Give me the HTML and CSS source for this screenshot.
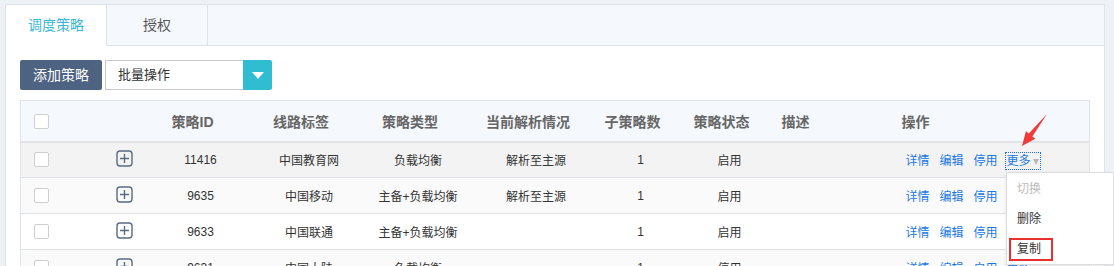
FILE: index.html
```html
<!DOCTYPE html>
<html lang="zh-CN">
<head>
    <meta charset="UTF-8">
    <title>调度策略</title>
    <link rel="stylesheet" href="styles.css">
</head>
<body>
    <div class="panel">
        <div class="tabs">
            <div class="tab active">调度策略</div>
            <div class="tab">授权</div>
        </div>
        <div class="content">
            <div class="toolbar">
                <div class="btn_add">添加策略</div>
                <div class="batch">
                    <div class="batch_text">批量操作</div>
                    <div class="batch_arrow"><i></i></div>
                </div>
            </div>
            <table class="grid">
                <colgroup>
                    <col style="width:42px">
                    <col style="width:88px">
                    <col style="width:92px">
                    <col style="width:125px">
                    <col style="width:93px">
                    <col style="width:143px">
                    <col style="width:66px">
                    <col style="width:112px">
                    <col style="width:36px">
                    <col>
                </colgroup>
                <thead>
                    <tr>
                        <th class="c_check"><span class="check"></span></th>
                        <th></th>
                        <th>策略ID</th>
                        <th>线路标签</th>
                        <th>策略类型</th>
                        <th>当前解析情况</th>
                        <th>子策略数</th>
                        <th>策略状态</th>
                        <th>描述</th>
                        <th class="c_ops">操作</th>
                    </tr>
                </thead>
                <tbody>
                    <tr class="hover">
                        <td class="c_check"><span class="check"></span></td>
                        <td class="c_expand"><svg width="17" height="17" viewBox="0 0 17 17"><rect x="1" y="1" width="15" height="15" rx="3" fill="none" stroke="#5b6b82" stroke-width="1.4"/><path d="M4 8.5h9M8.5 4v9" stroke="#5b6b82" stroke-width="1.4"/></svg></td>
                        <td>11416</td>
                        <td>中国教育网</td>
                        <td>负载均衡</td>
                        <td>解析至主源</td>
                        <td>1</td>
                        <td>启用</td>
                        <td></td>
                        <td class="c_ops"><a>详情</a><a>编辑</a><a>停用</a><a class="more">更多<b></b></a></td>
                    </tr>
                    <tr class="stripe">
                        <td class="c_check"><span class="check"></span></td>
                        <td class="c_expand"><svg width="17" height="17" viewBox="0 0 17 17"><rect x="1" y="1" width="15" height="15" rx="3" fill="none" stroke="#5b6b82" stroke-width="1.4"/><path d="M4 8.5h9M8.5 4v9" stroke="#5b6b82" stroke-width="1.4"/></svg></td>
                        <td>9635</td>
                        <td>中国移动</td>
                        <td>主备+负载均衡</td>
                        <td>解析至主源</td>
                        <td>1</td>
                        <td>启用</td>
                        <td></td>
                        <td class="c_ops"><a>详情</a><a>编辑</a><a>停用</a></td>
                    </tr>
                    <tr>
                        <td class="c_check"><span class="check"></span></td>
                        <td class="c_expand"><svg width="17" height="17" viewBox="0 0 17 17"><rect x="1" y="1" width="15" height="15" rx="3" fill="none" stroke="#5b6b82" stroke-width="1.4"/><path d="M4 8.5h9M8.5 4v9" stroke="#5b6b82" stroke-width="1.4"/></svg></td>
                        <td>9633</td>
                        <td>中国联通</td>
                        <td>主备+负载均衡</td>
                        <td></td>
                        <td>1</td>
                        <td>启用</td>
                        <td></td>
                        <td class="c_ops"><a>详情</a><a>编辑</a><a>停用</a></td>
                    </tr>
                    <tr class="stripe">
                        <td class="c_check"><span class="check"></span></td>
                        <td class="c_expand"><svg width="17" height="17" viewBox="0 0 17 17"><rect x="1" y="1" width="15" height="15" rx="3" fill="none" stroke="#5b6b82" stroke-width="1.4"/><path d="M4 8.5h9M8.5 4v9" stroke="#5b6b82" stroke-width="1.4"/></svg></td>
                        <td>9631</td>
                        <td>中国大陆</td>
                        <td>负载均衡</td>
                        <td></td>
                        <td>1</td>
                        <td>停用</td>
                        <td></td>
                        <td class="c_ops"><a>详情</a><a>编辑</a><a>启用</a><a class="more">更多<b></b></a></td>
                    </tr>
                </tbody>
            </table>
        </div>
    </div>

    <!-- dropdown opened from the first row's 更多 -->
    <div class="more_menu">
        <div class="item disabled">切换</div>
        <div class="item">删除</div>
        <div class="item"><span class="marked">复制</span></div>
    </div>

    <svg class="pointer" width="36" height="40" viewBox="0 0 36 40">
        <polygon points="6,36 9.9,21.3 12.8,23.4 31,4 16.4,26.6 19.3,28.7" fill="#f03b3b"/>
    </svg>
</body>
</html>
```

FILE: styles.css
```css
*{
    padding: 0;
    margin: 0;
    box-sizing: border-box;
}

html, body{
    overflow: hidden;
}

body{
    background-color: #eef2f7;
    font-family: "Liberation Sans", "Noto Sans CJK SC", sans-serif;
    font-size: 12px;
    color: #333;
}

.panel{
    margin: 4px 0 0 5px;
    width: 1100px;
    height: 300px;
    background-color: #fff;
    border: 1px solid #dde3ea;
}

.tabs{
    display: flex;
    height: 41px;
    background-color: #f5f8fc;
    border-bottom: 1px solid #dde3ea;
}

.tab{
    width: 101px;
    line-height: 40px;
    text-align: center;
    font-size: 14px;
    color: #555;
    border-right: 1px solid #dde3ea;
}

.tab.active{
    background-color: #fff;
    color: #3bb6d6;
    height: 41px;
}

.content{
    padding: 14px 0 0 14px;
}

.toolbar{
    display: flex;
    gap: 3px;
    height: 30px;
}

.btn_add{
    width: 82px;
    line-height: 30px;
    text-align: center;
    color: #fff;
    font-size: 14px;
    background-color: #4e6282;
    border-radius: 2px;
}

.batch{
    display: flex;
    height: 30px;
}

.batch_text{
    width: 138px;
    padding-left: 12px;
    line-height: 28px;
    font-size: 13px;
    color: #333;
    border: 1px solid #c8c8c8;
    border-right: none;
}

.batch_arrow{
    display: flex;
    align-items: center;
    justify-content: center;
    width: 29px;
    background-color: #30bcd1;
    border-radius: 0 2px 2px 0;
}

.batch_arrow i{
    width: 0;
    height: 0;
    border-left: 6px solid transparent;
    border-right: 6px solid transparent;
    border-top: 7px solid #fff;
}

.grid{
    margin-top: 10px;
    width: 1070px;
    table-layout: fixed;
    border-collapse: collapse;
    border: 1px solid #dde3ea;
}

.grid th{
    height: 41px;
    padding: 0 8px 0 0;
    background-color: #f5f8fc;
    border-bottom: 2px solid #e1e3e8;
    color: #666;
    font-size: 14px;
    font-weight: bold;
    text-align: center;
    white-space: nowrap;
}

.grid td{
    height: 36px;
    padding: 0 0 0 8px;
    border-bottom: 1px solid #dfe2ea;
    text-align: center;
    white-space: nowrap;
}

.grid tr.hover td{
    background-color: #f3f3f3;
}

.grid tr.stripe td{
    background-color: #fafafa;
}

.grid .c_check{
    padding: 0;
}

.check{
    display: inline-block;
    width: 15px;
    height: 15px;
    vertical-align: middle;
    background-color: #fff;
    border: 1px solid #cfcfcf;
    border-radius: 2px;
}

.grid .c_expand{
    padding: 0 18px 0 0;
    text-align: right;
}

.c_expand svg{
    display: inline-block;
    vertical-align: middle;
    margin-top: -4px;
}

.grid th.c_ops{
    padding-left: 84px;
    text-align: left;
}

.grid td.c_ops{
    padding-left: 88px;
    text-align: left;
}

.c_ops a{
    margin-right: 10px;
    color: #1a78e6;
}

.c_ops a.more{
    margin-left: -2px;
    padding: 1px 1px 1px 1px;
    outline: 1px dotted #1a6fd8;
}

.grid tr:not(:first-child) a.more{
    outline: none;
}

.more b{
    display: inline-block;
    margin-left: 2px;
    width: 0;
    height: 0;
    border-left: 3px solid transparent;
    border-right: 3px solid transparent;
    border-top: 6px solid #b8b8b8;
    vertical-align: middle;
}

.more_menu{
    position: absolute;
    left: 1006px;
    top: 172px;
    width: 108px;
    padding-top: 1px;
    background-color: #fff;
    border: 1px solid #ddd;
    box-shadow: 0 2px 4px rgba(0,0,0,0.08);
}

.more_menu .item{
    height: 30px;
    line-height: 30px;
    padding-left: 10px;
    font-size: 12px;
    color: #333;
}

.more_menu .item.disabled{
    color: #bbb;
}

.more_menu .marked{
    display: inline-block;
    height: 23px;
    line-height: 19px;
    margin-left: -8px;
    padding: 0 10px 0 6px;
    border: 2px solid #e8302f;
}

.pointer{
    position: absolute;
    left: 1016px;
    top: 110px;
}
```
